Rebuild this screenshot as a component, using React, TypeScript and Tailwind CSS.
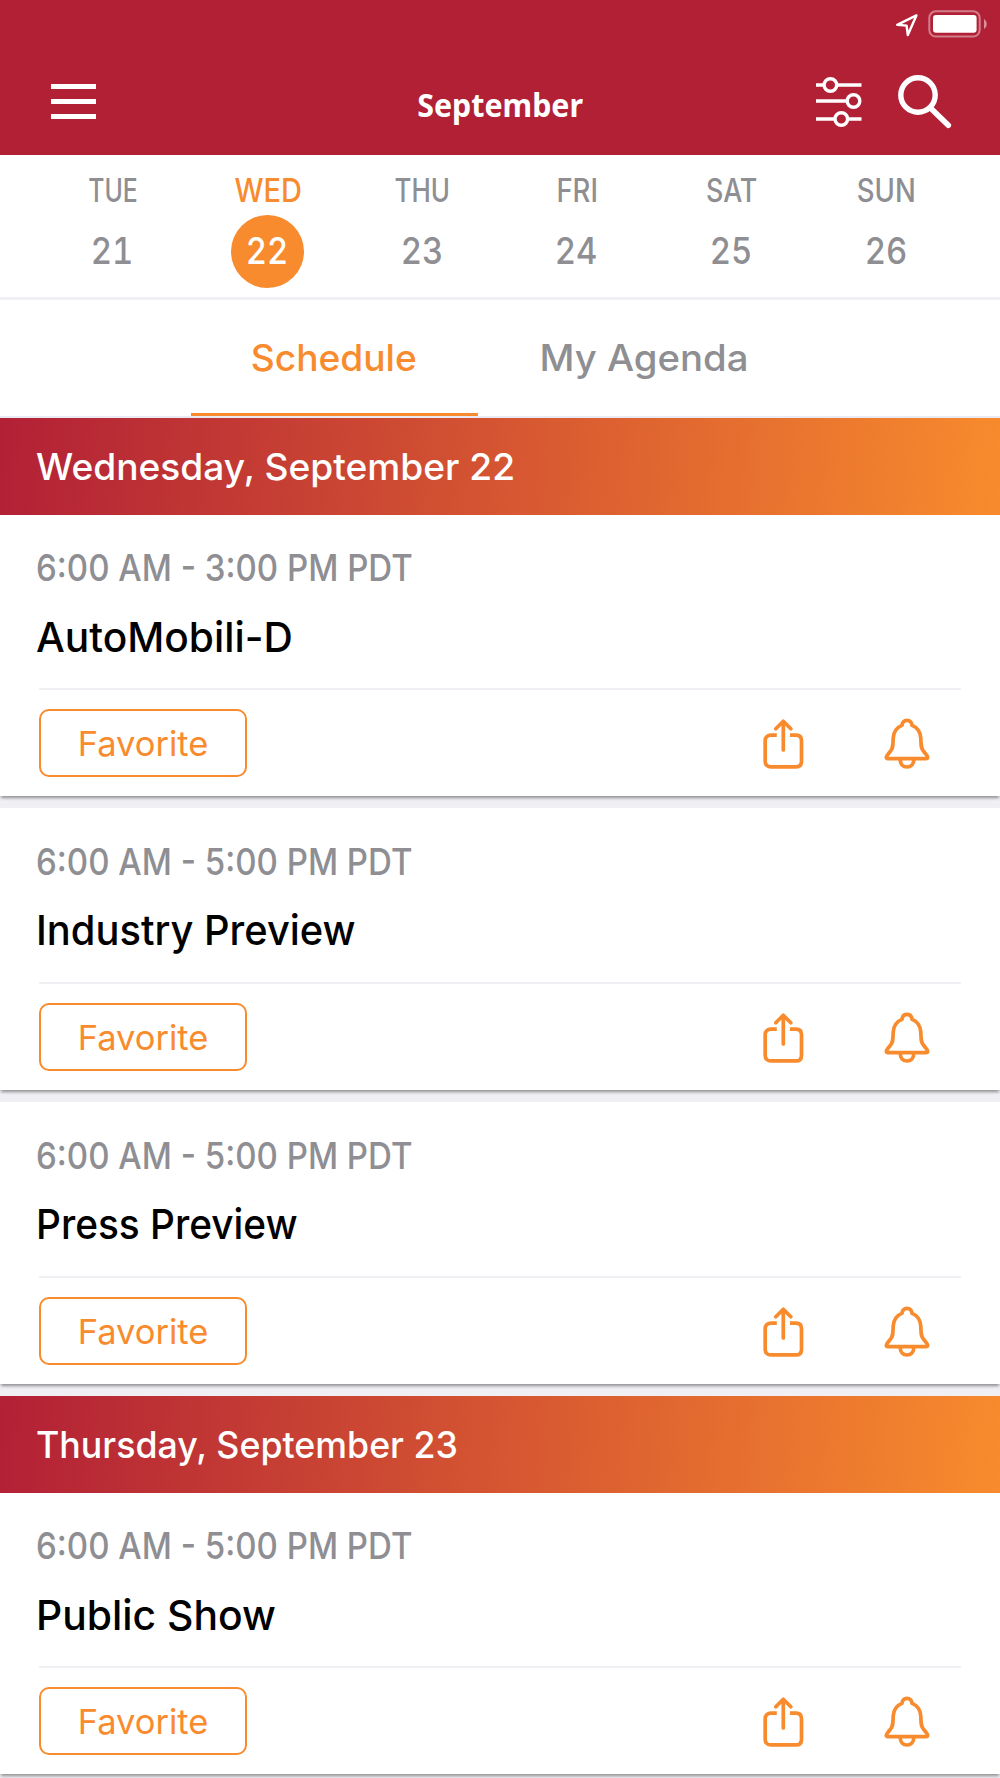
import React, { useState } from 'react';
import clsx from 'clsx';

interface DayInterface {
  name: string;
  date: number;
  fit: string;
}

interface EventInterface {
  id: number;
  time: string;
  title: string;
  fit: string;
}

interface SectionInterface {
  label: string;
  fit: string;
  events: EventInterface[];
}

const days: DayInterface[] = [
  { name: 'TUE', date: 21, fit: 'scale-x-[0.775]' },
  { name: 'WED', date: 22, fit: 'scale-x-[0.905]' },
  { name: 'THU', date: 23, fit: 'scale-x-[0.81]' },
  { name: 'FRI', date: 24, fit: 'scale-x-[0.86]' },
  { name: 'SAT', date: 25, fit: 'scale-x-[0.84]' },
  { name: 'SUN', date: 26, fit: 'scale-x-[0.86]' },
];

const sections: SectionInterface[] = [
  {
    label: 'Wednesday, September 22',
    fit: 'scale-x-[1.004]',
    events: [
      { id: 1, time: '6:00 AM - 3:00 PM PDT', title: 'AutoMobili-D', fit: 'scale-x-[0.991]' },
      { id: 2, time: '6:00 AM - 5:00 PM PDT', title: 'Industry Preview', fit: 'scale-x-[0.972]' },
      { id: 3, time: '6:00 AM - 5:00 PM PDT', title: 'Press Preview', fit: 'scale-x-[0.946]' },
    ],
  },
  {
    label: 'Thursday, September 23',
    fit: 'scale-x-[0.966]',
    events: [
      { id: 4, time: '6:00 AM - 5:00 PM PDT', title: 'Public Show', fit: 'scale-x-[0.996]' },
    ],
  },
];

const StatusBar: React.FC = () => (
  <div className="flex h-[49px] items-center justify-end gap-[9px] pr-[12px]">
    <svg className="h-[24px] w-[24px]" viewBox="0 0 24 24" fill="none" stroke="white" strokeWidth="2.4" strokeLinejoin="round">
      <path d="M21.4 2.4 L2.2 11.8 L11.6 12.6 L12.8 22 Z" />
    </svg>
    <svg className="h-[29px] w-[60px]" viewBox="0 0 60 29" fill="none">
      <rect x="1.3" y="1.3" width="50.4" height="25.2" rx="6.5" stroke="white" strokeOpacity="0.42" strokeWidth="2" />
      <rect x="5" y="5" width="43.6" height="17.8" rx="3" fill="white" />
      <path d="M56 9 C59.6 11 59.6 17 56 19 Z" fill="white" fillOpacity="0.5" />
    </svg>
  </div>
);

const FilterIcon: React.FC = () => (
  <svg className="h-[52px] w-[46px]" viewBox="0 0 46 52" fill="none" stroke="white" strokeWidth="3.4">
    <path d="M0 9H7.5M21.5 9H45.5M0 25H31M0 43H18.5M32.5 43H45.5" />
    <circle cx="14.4" cy="9" r="6.3" />
    <circle cx="37.5" cy="25" r="6.3" />
    <circle cx="25.3" cy="43" r="6.3" />
  </svg>
);

const SearchIcon: React.FC = () => (
  <svg className="mt-px h-[56px] w-[56px]" viewBox="0 0 56 56" fill="none" stroke="white">
    <circle cx="21" cy="21" r="17.2" strokeWidth="5.4" />
    <path d="M34 34.5L51.3 51.3" strokeWidth="5.6" strokeLinecap="round" />
  </svg>
);

const ShareIcon: React.FC = () => (
  <svg className="mt-[4px] h-[52px] w-[42px]" viewBox="0 0 42 52" fill="none" stroke="#f88b2d" strokeWidth="3.7" strokeLinecap="round" strokeLinejoin="round">
    <path strokeLinecap="butt" d="M13.8 16.2H8C4.5 16.2 2.2 18.2 2.2 21.7V42.4C2.2 45.9 4.5 47.9 8 47.9H33C36.5 47.9 38.5 45.9 38.5 42.4V21.7C38.5 18.2 36.5 16.2 33 16.2H27" />
    <path d="M20.3 31V2.5M12.8 9.8L20.3 2.3L27.8 9.8" />
  </svg>
);

const BellIcon: React.FC = () => (
  <svg className="mt-[2px] h-[52px] w-[46px]" viewBox="0 0 46 52" fill="none" stroke="#f88b2d" strokeWidth="3.7" strokeLinejoin="round">
    <path d="M23 2.4C20.2 2.4 18.4 4.2 17.9 7.4C12.4 9.6 9.5 14.4 9.2 20.2C8.9 27.4 9.2 30.2 6.2 33.6C3.4 36.6 1.9 38.2 2.4 40C2.6 40.6 3 40.6 3.8 40.6H42.2C43 40.6 43.4 40.6 43.6 40C44.1 38.2 42.6 36.6 39.8 33.6C36.8 30.2 37.1 27.4 36.8 20.2C36.5 14.4 33.6 9.6 28.1 7.4C27.6 4.2 25.8 2.4 23 2.4Z" />
    <path d="M16.2 41.5C16.2 46 19 49 23 49C27 49 29.8 46 29.8 41.5" />
  </svg>
);

const EventCard: React.FC<{ event: EventInterface }> = ({ event }) => (
  <div className="h-[281.8px] bg-white pt-[31.5px] shadow-[0_3px_3px_-1px_rgba(0,0,0,0.4)]">
    <div className="pl-[35.5px]">
      <div className="w-max origin-left scale-x-[0.893] text-[37px] leading-[44px] font-medium text-[#8e8e93]">{event.time}</div>
      <div className={clsx('mt-[20.5px] w-max origin-left text-[41px] leading-[52px] font-medium text-black', event.fit)}>
        {event.title}
      </div>
    </div>
    <div className="mx-[39px] mt-[25.4px] flex items-center justify-between border-t-2 border-[#efeff4] pt-[19px]">
      <button className="h-[68px] w-[208px] rounded-[10px] border-2 border-[#f88b2d] pt-[2px] text-[34.5px] text-[#f88b2d]">
        Favorite
      </button>
      <div className="flex items-center gap-[79px] pr-[31px]">
        <ShareIcon />
        <BellIcon />
      </div>
    </div>
  </div>
);

const App: React.FC = () => {
  const [selectedDay, setSelectedDay] = useState(22);

  return (
    <div className="h-[1778px] w-[1000px] overflow-hidden bg-[#efeff4] font-['Inter',sans-serif]">
      <header className="h-[155px] bg-[#b22036]">
        <StatusBar />
        <div className="mt-[24px] grid grid-cols-[1fr_auto_1fr] items-center pr-[47px] pl-[51px]">
          <div className="flex flex-col gap-[10px]">
            <span className="h-[4.8px] w-[45px] bg-white" />
            <span className="h-[4.8px] w-[45px] bg-white" />
            <span className="h-[4.8px] w-[45px] bg-white" />
          </div>
          <h1 className="-ml-[2px] mr-[2px] scale-x-[0.92] pt-[6px] font-['Noto_Sans',sans-serif] text-[33px] leading-[44px] font-bold text-white">September</h1>
          <div className="flex items-center justify-end gap-[35px]">
            <FilterIcon />
            <SearchIcon />
          </div>
        </div>
      </header>

      <div className="grid h-[145px] grid-cols-6 border-b-3 border-[#f1f1f5] bg-white px-[36px] pt-[19px]">
        {days.map((day) => (
          <div key={day.date} className="flex flex-col items-center" onClick={() => setSelectedDay(day.date)}>
            <div className={clsx('text-[32px] leading-[33px] font-medium', day.fit, selectedDay === day.date ? 'text-[#f88b2d]' : 'text-[#8e8e93]')}>
              {day.name}
            </div>
            <div
              className={clsx(
                'mt-[8px] flex h-[73px] w-[73px] items-center justify-center rounded-full pr-[2px] pb-px text-[37px] font-medium tabular-nums',
                selectedDay === day.date ? 'bg-[#f88b2d] text-white' : 'text-[#8e8e93]'
              )}
            >
              <span className="scale-x-[0.89]">{day.date}</span>
            </div>
          </div>
        ))}
      </div>

      <div className="flex h-[118px] gap-[23px] border-b-2 border-[#e9ebf4] bg-white pl-[191px] text-[37px] leading-[115px]">
        <div className="flex w-[287px] justify-center border-b-3 border-[#f88b2d] font-medium text-[#f88b2d]">
          <span className="-ml-[2px] scale-x-[1.003]">Schedule</span>
        </div>
        <div className="flex w-[287px] justify-center font-medium text-[#8e8e93]">
          <span className="-ml-[2px] scale-x-[1.035]">My Agenda</span>
        </div>
      </div>

      {sections.map((section) => (
        <section key={section.label}>
          <div className="flex h-[96.6px] items-center bg-[linear-gradient(95deg,#b22036,#f88b2d)] pl-[36px] text-[37px] font-medium text-white">
            <span className={clsx('origin-left', section.fit)}>{section.label}</span>
          </div>
          <div className="flex flex-col gap-[12px] pb-[12px]">
            {section.events.map((event) => (
              <EventCard key={event.id} event={event} />
            ))}
          </div>
        </section>
      ))}
    </div>
  );
};

export default App;
